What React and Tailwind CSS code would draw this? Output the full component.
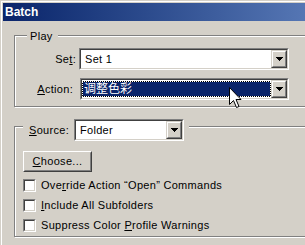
const font = "font-['Liberation_Sans','Noto_Sans_CJK_SC',sans-serif]";

function Sunken({ className = '', children }) {
  return (
    <div className={`border border-t-[#808080] border-l-[#808080] border-b-white border-r-white ${className}`}>
      <div className="flex h-full border border-t-[#404040] border-l-[#404040] border-b-[#d4d0c8] border-r-[#d4d0c8] bg-white">
        {children}
      </div>
    </div>
  );
}

function DropButton() {
  return (
    <div className="h-full w-[16px] border border-t-[#d4d0c8] border-l-[#d4d0c8] border-b-[#404040] border-r-[#404040]">
      <div className="flex h-full items-center justify-center border border-t-white border-l-white border-b-[#808080] border-r-[#808080] bg-[#d4d0c8]">
        <svg width="7" height="4" viewBox="0 0 7 4" shapeRendering="crispEdges">
          <path d="M0 0h7v1h-1v1h-1v1h-1v1h-1v-1h-1v-1h-1v-1h-1z" fill="#000" />
        </svg>
      </div>
    </div>
  );
}

function Combo({ width, children }) {
  return (
    <Sunken className={`h-[22px] ${width}`}>
      <div className="flex min-w-0 flex-1 items-stretch">{children}</div>
      <DropButton />
    </Sunken>
  );
}

function Checkbox({ children }) {
  return (
    <div className="flex h-[13px] items-center">
      <div className="size-[13px] border border-t-[#808080] border-l-[#808080] border-b-white border-r-white">
        <div className="size-full border border-t-[#404040] border-l-[#404040] border-b-[#d4d0c8] border-r-[#d4d0c8] bg-white" />
      </div>
      <span className="ml-[5px] whitespace-nowrap text-[11px] leading-[13px]">{children}</span>
    </div>
  );
}

function Cursor() {
  return (
    <svg className="absolute left-[214px] top-[51px]" width="13" height="22" viewBox="0 0 13 22">
      <path
        d="M0.5 0.5V17.5L4.5 13.5L7.5 20.5L10 19.5L7 12.5H12Z"
        fill="#fff"
        stroke="#000"
        strokeWidth="1"
        strokeLinejoin="miter"
      />
    </svg>
  );
}

export default function App() {
  return (
    <div className={`h-[245px] w-[305px] overflow-hidden bg-[#d4d0c8] pl-px pt-px tracking-[0.3px] text-black ${font}`}>
      <div className="h-full border-l border-t border-white pl-px pt-px">
        <div className="flex h-[18px] w-[320px] items-center bg-linear-to-r from-[#0a246a] to-[#5a7bb8] pl-[2px]">
          <span className="text-[12px] font-bold leading-none tracking-normal text-white">Batch</span>
        </div>

        <div className="relative ml-[11px] mt-[14px] w-[300px] border border-[#808080] pb-[6px] shadow-[inset_1px_1px_0_#fff,1px_1px_0_#fff]">
          <div className="-mt-[7px] ml-[12px] w-fit bg-[#d4d0c8] pl-[3px] pr-[5px] text-[11px] leading-[14px]">Play</div>

          <div className="mt-[5px] flex h-[22px] items-center">
            <div className="w-[64px] pr-[3px] text-right text-[11px]">
              Se<u>t</u>:
            </div>
            <Combo width="w-[210px]">
              <span className="flex items-center pl-[4px] text-[11px]">Set 1</span>
            </Combo>
          </div>

          <div className="mt-[8px] flex h-[22px] items-center">
            <div className="w-[64px] pr-[6px] text-right text-[11px]">
              <u>A</u>ction:
            </div>
            <div className="ml-px">
              <Combo width="w-[209px]">
                <div className="my-px flex flex-1 bg-black">
                  <div className="flex flex-1 items-center border border-dotted border-white bg-[#0a246a] bg-clip-padding pl-px text-[12px] leading-none tracking-normal text-white">
                    调整色彩
                  </div>
                </div>
              </Combo>
            </div>
          </div>

          <Cursor />
        </div>

        <div className="ml-[11px] mt-[19px] w-[300px] border border-[#808080] pb-[4px] shadow-[inset_1px_1px_0_#fff,1px_1px_0_#fff]">
          <div className="-mt-[8px] ml-[8px] flex w-fit items-center bg-[#d4d0c8] pl-[6px] pr-[5px]">
            <span className="text-[11px]">
              <u>S</u>ource:
            </span>
            <div className="ml-[5px]">
              <Combo width="w-[110px]">
                <span className="flex items-center pl-[4px] text-[11px]">Folder</span>
              </Combo>
            </div>
          </div>

          <div className="ml-[8px] mt-[10px] h-[21px] w-[69px] border border-t-white border-l-white border-b-[#404040] border-r-[#404040]">
            <div className="flex h-full items-center justify-center border border-t-[#d4d0c8] border-l-[#d4d0c8] border-b-[#808080] border-r-[#808080] text-[11px]">
              <span>
                <u>C</u>hoose...
              </span>
            </div>
          </div>

          <div className="ml-[8px] mt-[7px] flex flex-col gap-[7px]">
            <Checkbox>
              Ove<u>r</u>ride Action “Open” Commands
            </Checkbox>
            <Checkbox>
              <u>I</u>nclude All Subfolders
            </Checkbox>
            <Checkbox>
              Suppress Color <u>P</u>rofile Warnings
            </Checkbox>
          </div>
        </div>
      </div>
    </div>
  );
}
